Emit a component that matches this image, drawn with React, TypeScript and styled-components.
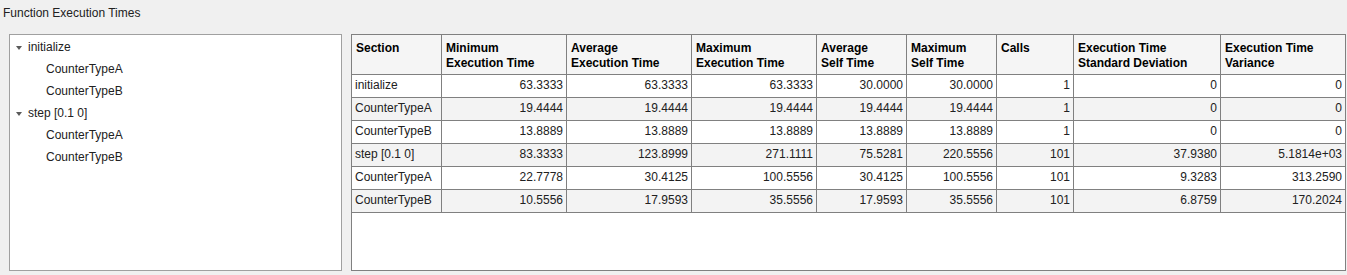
import styled, { createGlobalStyle } from 'styled-components';

const GlobalStyle = createGlobalStyle`
  html, body {
    margin: 0;
    padding: 0;
    background: #f0f0f0;
  }
  body {
    font-family: 'Liberation Sans', Arial, sans-serif;
    font-size: 12px;
    color: #212121;
  }
`;

const Page = styled.div`
  width: 1347px;
  height: 275px;
  display: flex;
  flex-direction: column;
  box-sizing: border-box;
`;

const Title = styled.div`
  height: 34px;
  padding: 6px 0 0 3px;
  box-sizing: border-box;
  line-height: 15px;
  color: #212121;
`;

const Panels = styled.div`
  display: flex;
  gap: 9px;
  padding-left: 9px;
  height: 237px;
`;

const TreePanel = styled.div`
  width: 333px;
  height: 100%;
  box-sizing: border-box;
  background: #fff;
  border: 1px solid #a0a0a0;
  padding-top: 1px;
`;

const TreeRow = styled.div<{ $level: number }>`
  height: 22px;
  display: flex;
  align-items: center;
  padding-left: ${({ $level }) => ($level === 0 ? 6 : 36)}px;
  color: #212121;
`;

const Caret = styled.span`
  width: 0;
  height: 0;
  border-left: 3.5px solid transparent;
  border-right: 3.5px solid transparent;
  border-top: 4px solid #5a5a5a;
  margin-right: 6px;
  margin-top: 1px;
`;

const TablePanel = styled.div`
  width: 995px;
  height: 100%;
  box-sizing: border-box;
  background: #fff;
  border: 1px solid #808080;
  overflow: hidden;
`;

const Grid = styled.table`
  border-collapse: separate;
  border-spacing: 0;
  table-layout: fixed;
  width: 993px;
`;

const HeadCell = styled.th<{ $w: number; $last?: boolean }>`
  width: ${({ $w }) => $w}px;
  box-sizing: border-box;
  height: 40px;
  padding: 6px 4px 0 4px;
  text-align: left;
  vertical-align: top;
  font-weight: bold;
  line-height: 15px;
  color: #000;
  background: #f5f5f5;
  border-bottom: 1px solid #808080;
  border-right: ${({ $last }) => ($last ? 'none' : '1px solid #808080')};
`;

const Row = styled.tr<{ $striped: boolean }>`
  background: ${({ $striped }) => ($striped ? '#f3f3f3' : '#fff')};
`;

const Cell = styled.td<{ $num?: boolean; $last?: boolean }>`
  box-sizing: border-box;
  height: 23px;
  padding: 0 3px 1px 3px;
  text-align: ${({ $num }) => ($num ? 'right' : 'left')};
  vertical-align: middle;
  line-height: 15px;
  white-space: nowrap;
  color: #212121;
  border-bottom: 1px solid #808080;
  border-right: ${({ $last }) => ($last ? 'none' : '1px solid #808080')};
`;

const columns = [
  { title: ['Section'], w: 90 },
  { title: ['Minimum', 'Execution Time'], w: 125 },
  { title: ['Average', 'Execution Time'], w: 125 },
  { title: ['Maximum', 'Execution Time'], w: 125 },
  { title: ['Average', 'Self Time'], w: 90 },
  { title: ['Maximum', 'Self Time'], w: 90 },
  { title: ['Calls'], w: 77 },
  { title: ['Execution Time', 'Standard Deviation'], w: 147 },
  { title: ['Execution Time', 'Variance'], w: 124 },
];

const rows = [
  ['initialize', '63.3333', '63.3333', '63.3333', '30.0000', '30.0000', '1', '0', '0'],
  ['CounterTypeA', '19.4444', '19.4444', '19.4444', '19.4444', '19.4444', '1', '0', '0'],
  ['CounterTypeB', '13.8889', '13.8889', '13.8889', '13.8889', '13.8889', '1', '0', '0'],
  ['step [0.1 0]', '83.3333', '123.8999', '271.1111', '75.5281', '220.5556', '101', '37.9380', '5.1814e+03'],
  ['CounterTypeA', '22.7778', '30.4125', '100.5556', '30.4125', '100.5556', '101', '9.3283', '313.2590'],
  ['CounterTypeB', '10.5556', '17.9593', '35.5556', '17.9593', '35.5556', '101', '6.8759', '170.2024'],
];

const tree = [
  { label: 'initialize', level: 0 },
  { label: 'CounterTypeA', level: 1 },
  { label: 'CounterTypeB', level: 1 },
  { label: 'step [0.1 0]', level: 0 },
  { label: 'CounterTypeA', level: 1 },
  { label: 'CounterTypeB', level: 1 },
];

const App = () => {
  return (
    <>
      <GlobalStyle />
      <Page>
        <Title>Function Execution Times</Title>
        <Panels>
          <TreePanel>
            {tree.map((node, i) => (
              <TreeRow key={i} $level={node.level}>
                {node.level === 0 && <Caret />}
                {node.label}
              </TreeRow>
            ))}
          </TreePanel>
          <TablePanel>
            <Grid>
              <thead>
                <tr>
                  {columns.map((c, i) => (
                    <HeadCell key={i} $w={c.w} $last={i === columns.length - 1}>
                      {c.title.map((t, j) => (
                        <div key={j}>{t}</div>
                      ))}
                    </HeadCell>
                  ))}
                </tr>
              </thead>
              <tbody>
                {rows.map((r, i) => (
                  <Row key={i} $striped={i % 2 === 1}>
                    {r.map((v, j) => (
                      <Cell key={j} $num={j > 0} $last={j === r.length - 1}>
                        {v}
                      </Cell>
                    ))}
                  </Row>
                ))}
              </tbody>
            </Grid>
          </TablePanel>
        </Panels>
      </Page>
    </>
  );
};

export default App;
